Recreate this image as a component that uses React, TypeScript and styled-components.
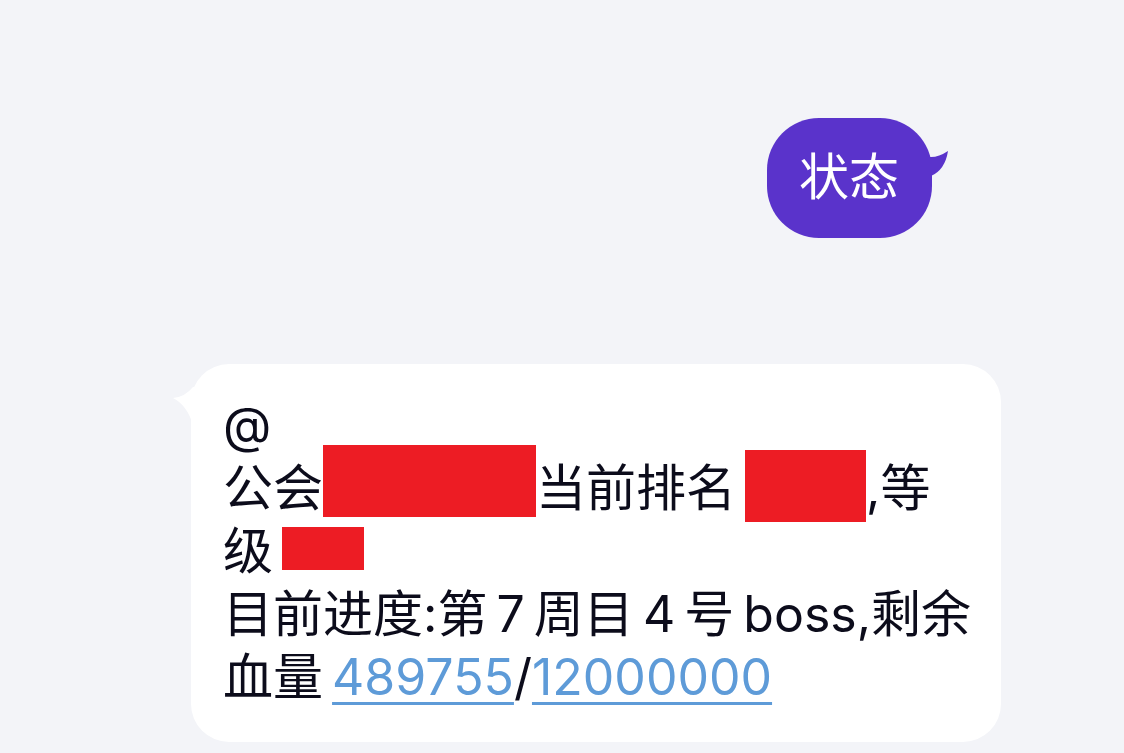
import styled, { createGlobalStyle } from "styled-components";

const GlobalStyle = createGlobalStyle`
  html, body {
    margin: 0;
    padding: 0;
    background-color: #f3f4f8;
  }
  body {
    font-family: Inter, "Noto Sans CJK SC", sans-serif;
  }
`;

const Thread = styled.div`
  display: flex;
  flex-direction: column;
  gap: 126px;
  padding: 118px 192px 0 191px;
  height: 753px;
  box-sizing: border-box;
  overflow: hidden;
`;

const Row = styled.div<{ outgoing?: boolean }>`
  display: flex;
  justify-content: ${(props) => (props.outgoing ? "flex-end" : "flex-start")};
`;

const Bubble = styled.div<{ outgoing?: boolean }>`
  position: relative;
  box-sizing: border-box;
  font-size: 50px;
  line-height: 63px;
  word-spacing: -5px;
  white-space: nowrap;
  color: ${(props) => (props.outgoing ? "#ffffff" : "#0c0c1b")};
  background-color: ${(props) => (props.outgoing ? "#5a33cb" : "#ffffff")};
  border-radius: ${(props) => (props.outgoing ? "52px" : "38px")};
  padding: ${(props) => (props.outgoing ? "28px 33px 29px 32px" : "30px 32px 33px 32px")};
  width: ${(props) => (props.outgoing ? "auto" : "810px")};
`;

const Tail = styled.svg<{ outgoing?: boolean }>`
  position: absolute;
  top: ${(props) => (props.outgoing ? "32px" : "19px")};
  ${(props) => (props.outgoing ? "right: -19px;" : "left: -20px;")}
`;

const Line = styled.div``;

const Redacted = styled.span<{ w: number; h: number; top: number }>`
  display: inline-block;
  vertical-align: top;
  width: ${(props) => props.w}px;
  height: ${(props) => props.h}px;
  margin-top: ${(props) => props.top}px;
  margin-bottom: ${(props) => 63 - props.h - props.top}px;
  background-color: #ed1c24;
`;

const Num = styled.span`
  color: #5e9bd8;
  text-decoration: underline;
  text-decoration-thickness: 3px;
  text-underline-offset: 7px;
`;

function OutTail() {
  return (
    <Tail outgoing width="22" height="30" viewBox="0 0 22 30">
      <path d="M0 7 L2 7 Q10 7 19 1 Q16 20 2 26 L0 26 Z" fill="#5a33cb" />
    </Tail>
  );
}

function InTail() {
  return (
    <Tail width="24" height="45" viewBox="0 0 24 45">
      <path d="M24 4 L22 4 Q14 14 2 15 Q16 22 22 42 L24 42 Z" fill="#ffffff" />
    </Tail>
  );
}

export default function App() {
  return (
    <>
      <GlobalStyle />
      <Thread>
        <Row outgoing>
          <Bubble outgoing>
            状态
            <OutTail />
          </Bubble>
        </Row>
        <Row>
          <Bubble>
            <InTail />
            <Line>@</Line>
            <Line>
              公会
              <Redacted w={213} h={72} top={-12} />
              当前排名 <Redacted w={121} h={72} top={-7} />,等
            </Line>
            <Line>
              级 <Redacted w={82} h={43} top={7} />
            </Line>
            <Line>目前进度:第 7 周目 4 号 boss,剩余</Line>
            <Line>
              血量 <Num>489755</Num>/<Num>12000000</Num>
            </Line>
          </Bubble>
        </Row>
      </Thread>
    </>
  );
}
